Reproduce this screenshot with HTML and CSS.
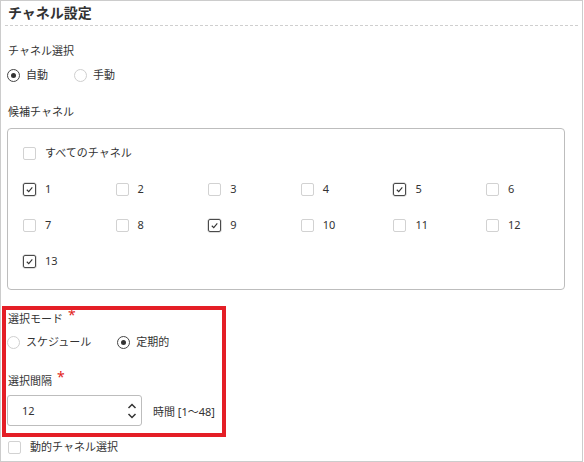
FILE: index.html
```html
<!DOCTYPE html>
<html lang="ja">
<head>
<meta charset="utf-8">
<link rel="stylesheet" href="styles.css">
</head>
<body>
<div class="panel">
  <div class="panel-head"><h2 class="title">チャネル設定</h2></div>

  <div class="field field-first">
    <div class="label">チャネル選択</div>
    <div class="radio-row">
      <label class="radio"><span class="dot on"></span><span>自動</span></label>
      <label class="radio"><span class="dot"></span><span>手動</span></label>
    </div>
  </div>

  <div class="field field-cands">
    <div class="label">候補チャネル</div>
    <div class="chan-box">
      <label class="check all"><span class="box"></span><span>すべてのチャネル</span></label>
      <div class="chan-grid">
        <label class="check"><span class="box on"><svg viewBox="0 0 13 13"><path d="M3.3 6.8 L5.6 9 L9.8 4" /></svg></span><span>1</span></label>
        <label class="check"><span class="box"></span><span>2</span></label>
        <label class="check"><span class="box"></span><span>3</span></label>
        <label class="check"><span class="box"></span><span>4</span></label>
        <label class="check"><span class="box on"><svg viewBox="0 0 13 13"><path d="M3.3 6.8 L5.6 9 L9.8 4" /></svg></span><span>5</span></label>
        <label class="check"><span class="box"></span><span>6</span></label>
        <label class="check"><span class="box"></span><span>7</span></label>
        <label class="check"><span class="box"></span><span>8</span></label>
        <label class="check"><span class="box on"><svg viewBox="0 0 13 13"><path d="M3.3 6.8 L5.6 9 L9.8 4" /></svg></span><span>9</span></label>
        <label class="check"><span class="box"></span><span>10</span></label>
        <label class="check"><span class="box"></span><span>11</span></label>
        <label class="check"><span class="box"></span><span>12</span></label>
        <label class="check"><span class="box on"><svg viewBox="0 0 13 13"><path d="M3.3 6.8 L5.6 9 L9.8 4" /></svg></span><span>13</span></label>
      </div>
    </div>
  </div>

  <div class="field field-mode">
    <div class="label">選択モード<span class="req">*</span></div>
    <div class="radio-row">
      <label class="radio"><span class="dot"></span><span>スケジュール</span></label>
      <label class="radio"><span class="dot on"></span><span>定期的</span></label>
    </div>
  </div>

  <div class="field field-interval">
    <div class="label">選択間隔<span class="req">*</span></div>
    <div class="interval-row">
      <div class="spin">
        <span class="spin-val">12</span>
        <svg class="spin-arrows" viewBox="0 0 10 18"><path d="M1.5 6 L5 2.5 L8.5 6 M1.5 12 L5 15.5 L8.5 12" /></svg>
      </div>
      <span class="unit">時間 [1〜48]</span>
    </div>
  </div>

  <label class="check dyn"><span class="box"></span><span>動的チャネル選択</span></label>

  <div class="annot"></div>
</div>
</body>
</html>
```
FILE: styles.css
```css
html, body { margin: 0; padding: 0; background: #fff; }
body {
  font-family: "Noto Sans", "Noto Sans CJK JP", sans-serif;
  font-size: 11px;
  color: #333;
}
.panel {
  position: relative;
  width: 583px;
  height: 462px;
  box-sizing: border-box;
  border: 1px solid #cccccc;
  padding: 0 0 0 6px;
  overflow: hidden;
}
.panel-head {
  margin: 0 4px 0 -2px;
  padding: 2px 3px;
  border-bottom: 1px dashed #cfcfcf;
}
.title {
  margin: 0;
  font-size: 14px;
  line-height: 20px;
  font-weight: bold;
  color: #333;
}
.label { line-height: 16px; margin-left: 1px; }
.field-first { margin-top: 17px; }
.radio-row { display: flex; gap: 26px; margin-top: 8px; line-height: 16px; }
.radio { display: flex; align-items: center; gap: 6px; }
.dot {
  width: 13px; height: 13px; box-sizing: border-box;
  border: 1px solid #cfcfcf; border-radius: 50%;
  display: inline-flex; align-items: center; justify-content: center;
}
.dot.on { border-color: #444; }
.dot.on::after { content: ""; width: 5px; height: 5px; border-radius: 50%; background: #333; }

.field-cands { margin-top: 21px; }
.chan-box {
  margin-top: 8px;
  width: 558px;
  height: 162px;
  box-sizing: border-box;
  border: 1px solid #bdbdbd;
  border-radius: 4px;
  padding: 14px 0 0 15px;
}
.check { display: flex; align-items: center; gap: 9px; height: 20px; line-height: 16px; }
.box {
  width: 13px; height: 13px; box-sizing: border-box;
  border: 1px solid #d2d2d2; border-radius: 2px;
  display: inline-flex; align-items: center; justify-content: center;
  flex: none;
}
.box.on { border-color: #4a4a4a; box-shadow: 0 0 0 0.5px #bbb; }
.box svg { width: 13px; height: 13px; fill: none; stroke: #333; stroke-width: 1.3; }
.check.all { margin-bottom: 16px; }
.chan-grid {
  display: grid;
  grid-template-columns: repeat(6, 92.6px);
  row-gap: 16px;
}

.field-mode { margin-top: 20px; }
.field-mode .radio-row { margin-top: 7px; }
.req { color: #e2231a; font-size: 14px; position: relative; top: -3px; margin-left: 5px; }
.field-interval { margin-top: 22px; }
.interval-row { display: flex; align-items: center; gap: 11px; margin-top: 6px; }
.spin {
  width: 135px; height: 31px; box-sizing: border-box;
  border: 1px solid #bdbdbd; border-radius: 3px;
  display: flex; align-items: center; justify-content: space-between;
  padding: 0 4px 0 14px;
}
.spin-val { font-size: 11px; }
.spin-arrows { width: 10px; height: 18px; fill: none; stroke: #333; stroke-width: 1.5; }
.unit { margin-top: 1px; }
.check.dyn { margin-top: 11px; margin-left: 1px; gap: 9px; }

.annot {
  position: absolute;
  left: 1px;
  top: 305px;
  width: 224px;
  height: 131px;
  box-sizing: border-box;
  border: 4px solid #e41e26;
  pointer-events: none;
}
```
